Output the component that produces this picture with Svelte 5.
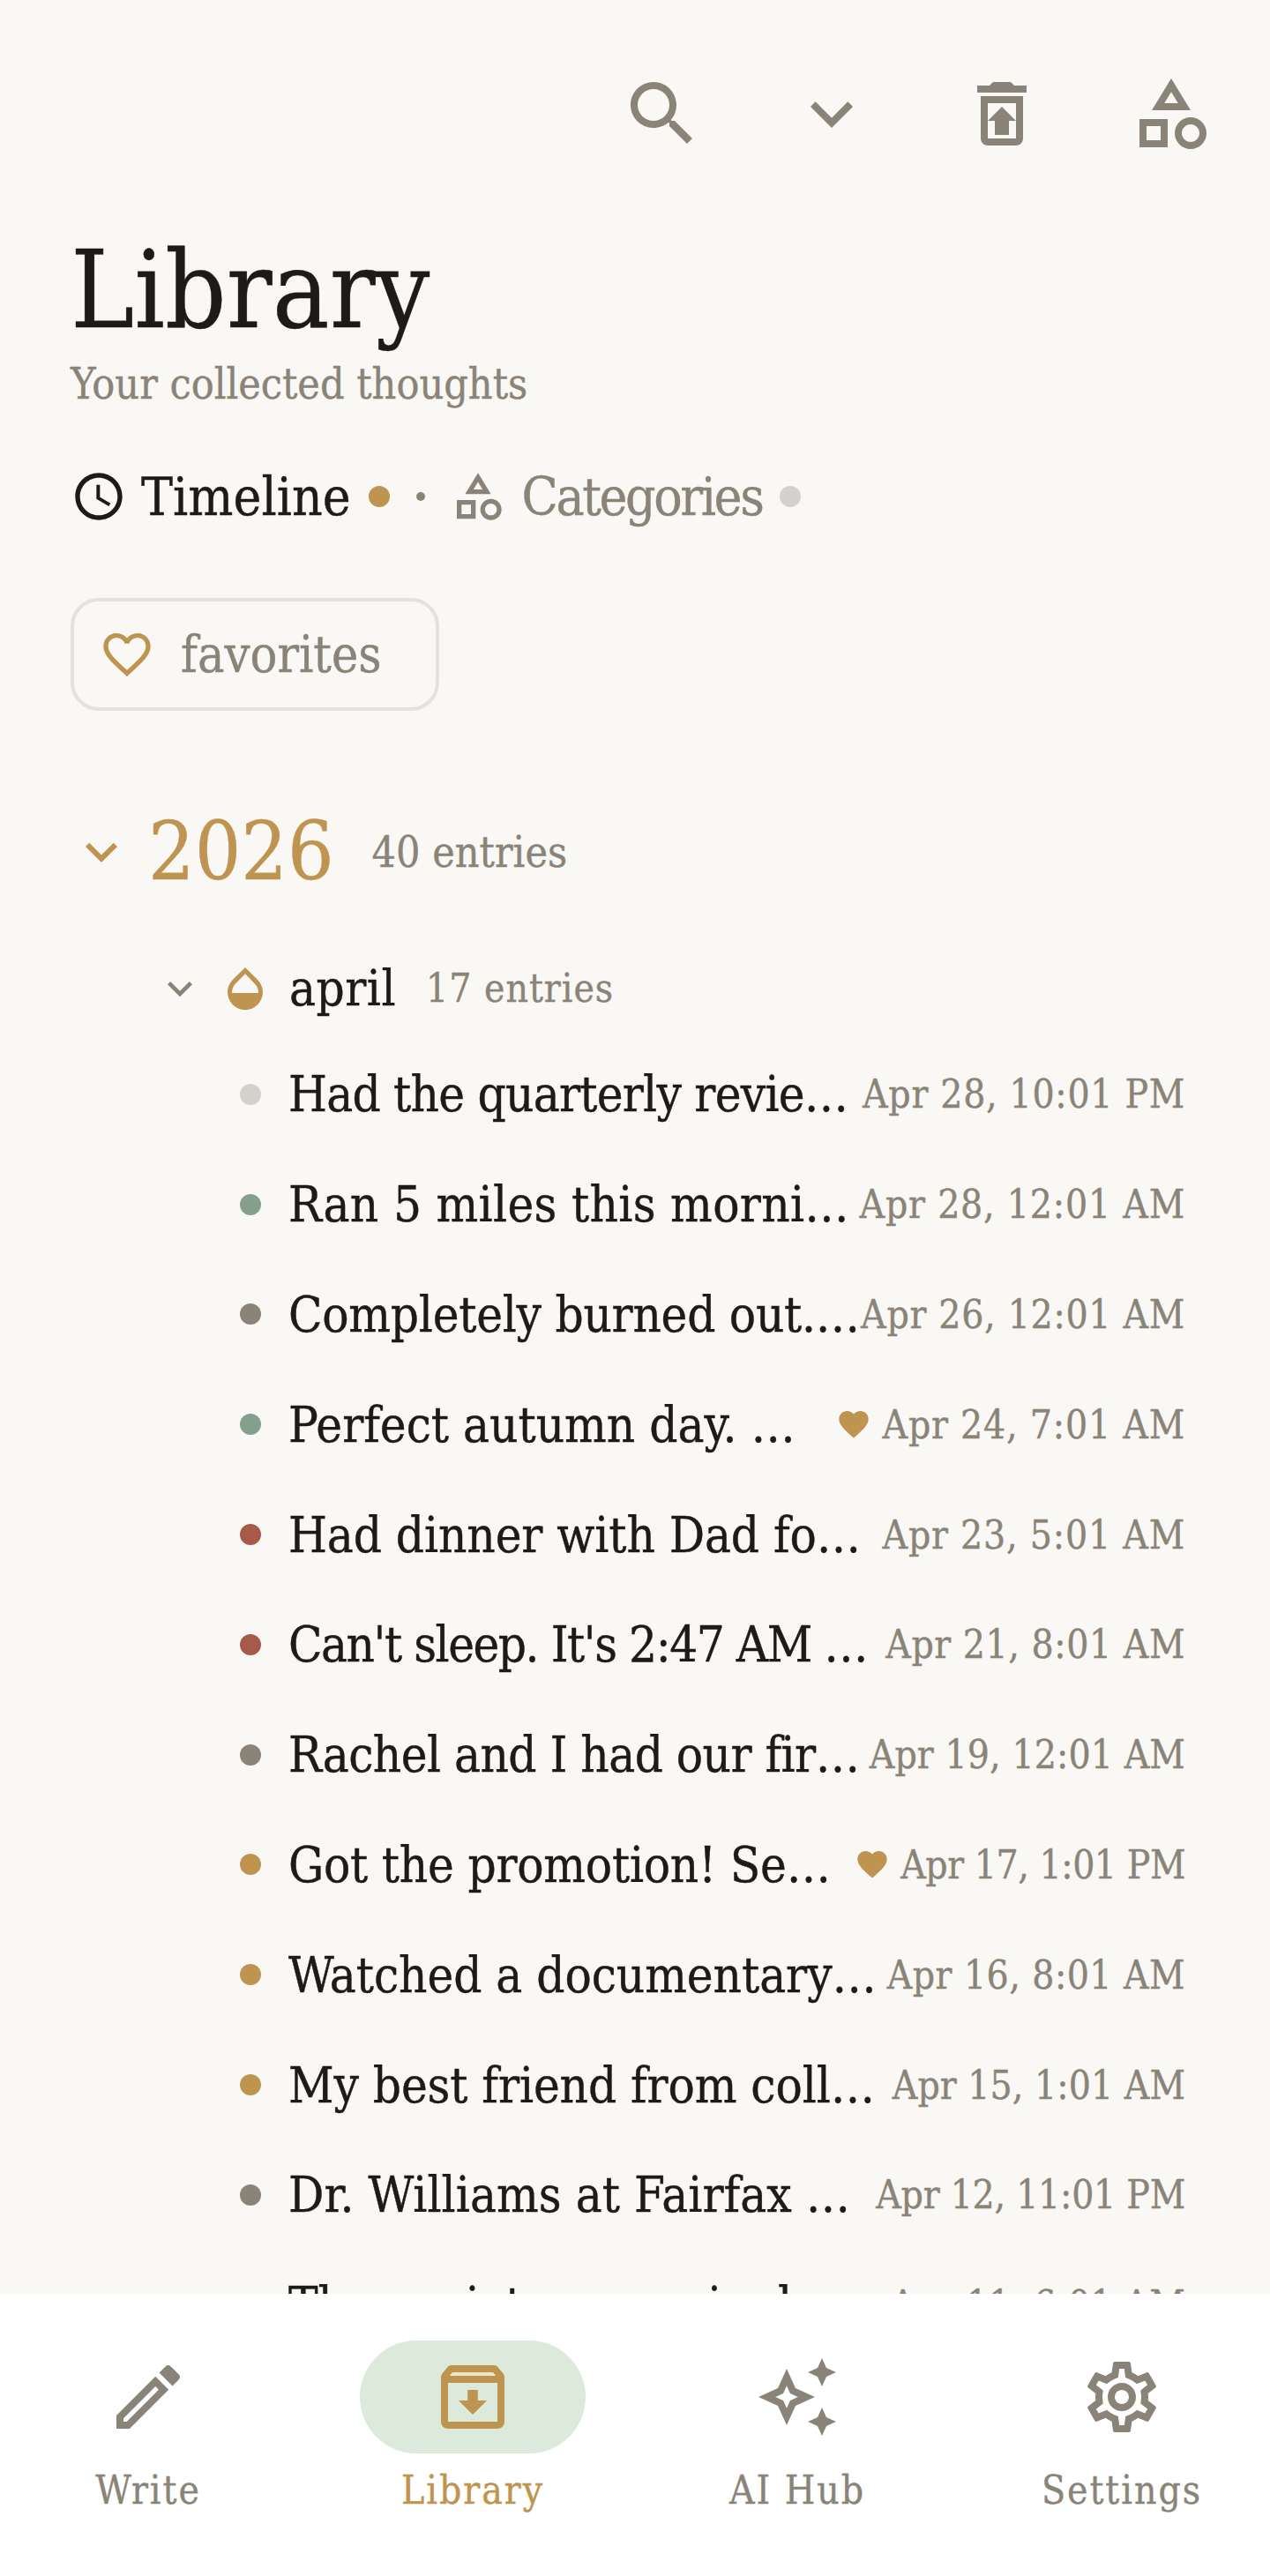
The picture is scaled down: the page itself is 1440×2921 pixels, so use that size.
<script lang="ts">
  // ls / dateLs: per-row tracking, the serif here runs wider or narrower than the original on some rows
  const rows = [
    { title: 'Had the quarterly revie…', ls: -0.77, date: 'Apr 28, 10:01 PM', dateLs: 0.7, mood: 'grey' },
    { title: 'Ran 5 miles this morni…', ls: 0.3, date: 'Apr 28, 12:01 AM', dateLs: 0.8, mood: 'green' },
    { title: 'Completely burned out.…', ls: -0.27, date: 'Apr 26, 12:01 AM', dateLs: 0.7, mood: 'taupe' },
    { title: 'Perfect autumn day. …', ls: -0.02, date: 'Apr 24, 7:01 AM', dateLs: 0.8, mood: 'green', fav: true },
    { title: 'Had dinner with Dad fo…', ls: -0.1, date: 'Apr 23, 5:01 AM', dateLs: 0.8, mood: 'red' },
    { title: "Can't sleep. It's 2:47 AM …", ls: -1.48, date: 'Apr 21, 8:01 AM', dateLs: 0.55, mood: 'red' },
    { title: 'Rachel and I had our fir…', ls: -0.55, date: 'Apr 19, 12:01 AM', dateLs: 0.1, mood: 'taupe' },
    { title: 'Got the promotion! Se…', ls: -0.24, date: 'Apr 17, 1:01 PM', dateLs: -0.45, mood: 'gold', fav: true },
    { title: 'Watched a documentary…', ls: -0.07, date: 'Apr 16, 8:01 AM', dateLs: 0.45, mood: 'gold' },
    { title: 'My best friend from coll…', ls: -0.1, date: 'Apr 15, 1:01 AM', dateLs: 0.05, mood: 'gold' },
    { title: 'Dr. Williams at Fairfax …', ls: 0.04, date: 'Apr 12, 11:01 PM', dateLs: -0.25, mood: 'taupe' },
    { title: 'The anxiety was crippl…', ls: -0.3, date: 'Apr 11, 6:01 AM', dateLs: 0.2, mood: 'taupe' },
  ];

  const tabs = [
    { label: 'Write', d: 'M14.06 9.02l.92.92L5.92 19H5v-.92l9.06-9.06M17.66 3c-.25 0-.51.1-.7.29l-1.83 1.83 3.75 3.75 1.83-1.83c.39-.39.39-1.02 0-1.41l-2.34-2.34c-.2-.2-.45-.29-.71-.29zm-3.6 3.19L3 17.25V21h3.75L17.81 9.94l-3.75-3.75z' },
    { label: 'Library', active: true, d: 'M20.54 5.23l-1.39-1.68C18.88 3.21 18.47 3 18 3H6c-.47 0-.88.21-1.16.55L3.46 5.23C3.17 5.57 3 6.02 3 6.5V19c0 1.1.9 2 2 2h14c1.1 0 2-.9 2-2V6.5c0-.48-.17-.93-.46-1.27zM6.24 5h11.52l.81.97H5.44l.8-.97zM5 19V8h14v11H5zm8.45-9h-2.9v3H8l4 4 4-4h-2.55z' },
    { label: 'AI Hub', d: 'M19 9l1.25-2.75L23 5l-2.75-1.25L19 1l-1.25 2.75L15 5l2.75 1.25L19 9zm-7.5.5L9 4 6.5 9.5 1 12l5.5 2.5L9 20l2.5-5.5L17 12l-5.5-2.5zM9.99 12.99L9 15.17l-.99-2.18L5.83 12l2.18-.99L9 8.83l.99 2.18 2.18.99-2.18.99zM19 15l-1.25 2.75L15 19l2.75 1.25L19 23l1.25-2.75L23 19l-2.75-1.25L19 15z' },
    { label: 'Settings', d: 'M19.43 12.98c.04-.32.07-.64.07-.98 0-.34-.03-.66-.07-.98l2.11-1.65c.19-.15.24-.42.12-.64l-2-3.46c-.09-.16-.26-.25-.44-.25-.06 0-.12.01-.17.03l-2.49 1c-.52-.4-1.08-.73-1.69-.98l-.38-2.65C14.46 2.18 14.25 2 14 2h-4c-.25 0-.46.18-.49.42l-.38 2.65c-.61.25-1.17.59-1.69.98l-2.49-1c-.06-.02-.12-.03-.18-.03-.17 0-.34.09-.43.25l-2 3.46c-.13.22-.07.49.12.64l2.11 1.65c-.04.32-.07.65-.07.98 0 .33.03.66.07.98l-2.11 1.65c-.19.15-.24.42-.12.64l2 3.46c.09.16.26.25.44.25.06 0 .12-.01.17-.03l2.49-1c.52.4 1.08.73 1.69.98l.38 2.65c.03.24.24.42.49.42h4c.25 0 .46-.18.49-.42l.38-2.65c.61-.25 1.17-.59 1.69-.98l2.49 1c.06.02.12.03.18.03.17 0 .34-.09.43-.25l2-3.46c.12-.22.07-.49-.12-.64l-2.11-1.65zm-1.98-1.71c.04.31.05.52.05.73 0 .21-.02.43-.05.73l-.14 1.13.89.7 1.08.84-.7 1.21-1.27-.51-1.04-.42-.9.68c-.43.32-.84.56-1.25.73l-1.06.43-.16 1.13-.2 1.35h-1.4l-.19-1.35-.16-1.13-1.06-.43c-.43-.18-.83-.41-1.23-.71l-.91-.7-1.06.43-1.27.51-.7-1.21 1.08-.84.89-.7-.14-1.13c-.03-.31-.05-.54-.05-.74s.02-.43.05-.73l.14-1.13-.89-.7-1.08-.84.7-1.21 1.27.51 1.04.42.9-.68c.43-.32.84-.56 1.25-.73l1.06-.43.16-1.13.2-1.35h1.39l.19 1.35.16 1.13 1.06.43c.43.18.83.41 1.23.71l.91.7 1.06-.43 1.27-.51.7 1.21-1.07.85-.89.7.14 1.13zM12 8c-2.21 0-4 1.79-4 4s1.79 4 4 4 4-1.79 4-4-1.79-4-4-4zm0 6c-1.1 0-2-.9-2-2s.9-2 2-2 2 .9 2 2-.9 2-2 2z' },
  ];

  const search = 'M15.5 14h-.79l-.28-.27C15.41 12.59 16 11.11 16 9.5 16 5.91 13.09 3 9.5 3S3 5.91 3 9.5 5.91 16 9.5 16c1.61 0 3.09-.59 4.23-1.57l.27.28v.79l5 4.99L20.49 19l-4.99-5zm-6 0C7.01 14 5 11.99 5 9.5S7.01 5 9.5 5 14 7.01 14 9.5 11.99 14 9.5 14z';
  const chevron = 'M16.59 8.59L12 13.17 7.41 8.59 6 10l6 6 6-6z';
  const restore = 'M14 14h2l-4-4-4 4h2v4h4v-4zM6 7v12c0 1.1.9 2 2 2h8c1.1 0 2-.9 2-2V7H6zm10 12H8V9h8v10zM15.5 4l-1-1h-5l-1 1H5v2h14V4h-3.5z';
  const category = 'M12 2l-5.5 9h11L12 2zm0 3.84L13.93 9h-3.87L12 5.84zM17.5 13c-2.49 0-4.5 2.01-4.5 4.5s2.01 4.5 4.5 4.5 4.5-2.01 4.5-4.5-2.01-4.5-4.5-4.5zm0 7c-1.38 0-2.5-1.12-2.5-2.5s1.12-2.5 2.5-2.5 2.5 1.12 2.5 2.5-1.12 2.5-2.5 2.5zM3 21.5h8v-8H3v8zm2-6h4v4H5v-4z';
  const clock = 'M11.99 2C6.47 2 2 6.48 2 12s4.47 10 9.99 10C17.52 22 22 17.52 22 12S17.52 2 11.99 2zM12 20c-4.42 0-8-3.58-8-8s3.58-8 8-8 8 3.58 8 8-3.58 8-8 8zm.5-13H11v6l5.25 3.15.75-1.23-4.5-2.67z';
  const heartOutline = 'M16.5 3c-1.74 0-3.41.81-4.5 2.09C10.91 3.81 9.24 3 7.5 3 4.42 3 2 5.42 2 8.5c0 3.78 3.4 6.86 8.55 11.54L12 21.35l1.45-1.32C18.6 15.36 22 12.28 22 8.5 22 5.42 19.58 3 16.5 3zm-4.4 15.55l-.1.1-.1-.1C7.14 14.24 4 11.39 4 8.5 4 6.5 5.5 5 7.5 5c1.54 0 3.04.99 3.57 2.36h1.87C13.46 5.99 14.96 5 16.5 5c2 0 3.5 1.5 3.5 3.5 0 2.89-3.14 5.74-7.9 10.05z';
  const heart = 'M12 21.35l-1.45-1.32C5.4 15.36 2 12.28 2 8.5 2 5.42 4.42 3 7.5 3c1.74 0 3.41.81 4.5 2.09C13.09 3.81 14.76 3 16.5 3 19.58 3 22 5.42 22 8.5c0 3.78-3.4 6.86-8.55 11.54L12 21.35z';
  const drop = 'M17.66 8L12 2.35 6.34 8C4.78 9.56 4 11.64 4 13.64s.78 4.11 2.34 5.67 3.61 2.35 5.66 2.35 4.1-.79 5.66-2.35S20 15.64 20 13.64 19.22 9.56 17.66 8zM6 14c.01-2 .62-3.27 1.76-4.4L12 5.27l4.24 4.38C17.38 10.77 17.99 12 18 14H6z';
</script>

<div class="app">
  <main class="content">
    <div class="toolbar">
      {#each [search, chevron, restore, category] as d}
        <svg class="icon96" viewBox="0 0 24 24"><path {d} /></svg>
      {/each}
    </div>

    <h1>Library</h1>
    <p class="subtitle">Your collected thoughts</p>

    <div class="view-switch">
      <svg class="icon64 ink" viewBox="0 0 24 24"><path d={clock} /></svg>
      <span class="view on">Timeline</span>
      <span class="dot gold"></span>
      <span class="sep"></span>
      <svg class="icon64" viewBox="0 0 24 24"><path d={category} /></svg>
      <span class="view">Categories</span>
      <span class="dot grey"></span>
    </div>

    <div class="chip">
      <svg class="icon64 goldfill" viewBox="0 0 24 24"><path d={heartOutline} /></svg>
      <span>favorites</span>
    </div>

    <div class="year">
      <svg class="icon72 goldfill" viewBox="0 0 24 24"><path d={chevron} /></svg>
      <span class="year-num">2026</span>
      <span class="year-count">40 entries</span>
    </div>

    <div class="month">
      <svg class="icon56" viewBox="0 0 24 24"><path d={chevron} /></svg>
      <svg class="icon60 goldfill" viewBox="0 0 24 24"><path d={drop} /></svg>
      <span class="month-name">april</span>
      <span class="month-count">17 entries</span>
    </div>

    <ul class="entries">
      {#each rows as r}
        <li>
          <span class="dot {r.mood}"></span>
          <span class="title" style="letter-spacing: {r.ls}px">{r.title}</span>
          {#if r.fav}
            <svg class="icon40 goldfill" viewBox="0 0 24 24"><path d={heart} /></svg>
          {/if}
          <span class="date" style="letter-spacing: {r.dateLs}px">{r.date}</span>
        </li>
      {/each}
    </ul>
  </main>

  <nav>
    {#each tabs as t}
      <div class="tab" class:active={t.active}>
        <div class="pill">
          <svg class="icon96" viewBox="0 0 24 24">
            {#if t.active}<rect x="5" y="5" width="14" height="1.6" fill="#e8e6c8" />{/if}
            <path d={t.d} />
          </svg>
        </div>
        <span>{t.label}</span>
      </div>
    {/each}
  </nav>
</div>

<style>
  :global(body) {
    margin: 0;
    background: #faf8f5;
  }
  .app {
    width: 1440px;
    height: 2921px;
    display: flex;
    flex-direction: column;
    font-family: 'DejaVu Serif', 'Liberation Serif', serif;
    font-stretch: condensed;
    -webkit-text-stroke: 0.4px currentColor;
    color: #1c1b17;
    background: #faf8f5;
  }
  .content {
    flex: 1;
    min-height: 0;
    overflow: hidden;
    padding: 81px 96px 0 80px;
  }
  svg {
    display: block;
    flex: none;
    fill: #8a8478;
  }
  .icon96 { width: 96px; height: 96px; }
  .icon72 { width: 72px; height: 72px; }
  .icon64 { width: 64px; height: 64px; }
  .icon60 { width: 60px; height: 60px; }
  .icon56 { width: 56px; height: 56px; }
  .icon40 { width: 40px; height: 40px; }
  .ink { fill: #1c1b17; }
  .goldfill { fill: #be9450; }

  .toolbar {
    display: flex;
    justify-content: flex-end;
    gap: 96.5px;
    margin-right: -32px;
  }
  h1 {
    margin: 83.5px 0 0;
    font-size: 121px;
    font-weight: 400;
    line-height: 138px;
  }
  .subtitle {
    margin: 0;
    font-size: 48px;
    line-height: 72px;
    color: #8a8478;
  }
  .view-switch {
    display: flex;
    align-items: center;
    height: 64px;
    margin-top: 60px;
    font-size: 60px;
  }
  .view { color: #8a8478; margin-left: 18px; letter-spacing: -2.4px; }
  .view.on { color: #1c1b17; margin-left: 16px; letter-spacing: 0; }
  .view-switch .dot { margin-left: 20px; }
  .sep {
    width: 10px;
    height: 10px;
    border-radius: 50%;
    background: #8a8478;
    margin: 0 28px 0 30px;
  }
  .dot {
    width: 24px;
    height: 24px;
    border-radius: 50%;
    flex: none;
    background: #8a8478;
  }
  .dot.gold { background: #be9450; }
  .dot.grey { background: #d4d0cb; }
  .dot.green { background: #84a08c; }
  .dot.red { background: #a85a4a; }
  .dot.taupe { background: #8a8478; }

  .chip {
    display: inline-flex;
    align-items: center;
    gap: 29px;
    height: 128px;
    width: 418px;
    box-sizing: border-box;
    margin-top: 83px;
    padding: 0 28px;
    border: 4px solid #e3e2de;
    border-radius: 32px;
    font-size: 57px;
    color: #8a8478;
  }

  .year {
    display: flex;
    align-items: center;
    margin-top: 100px;
    margin-left: -1px;
    height: 120px;
  }
  .year-num {
    margin-left: 17px;
    font-size: 92px;
    color: #be9450;
  }
  .year-count {
    margin-left: 43px;
    font-size: 48px;
    color: #8a8478;
  }

  .month {
    display: flex;
    align-items: center;
    height: 80px;
    margin-top: 55px;
    padding-left: 96px;
  }
  .month .icon60 { margin-left: 16px; }
  .month-name {
    margin-left: 20px;
    font-size: 56px;
    letter-spacing: 0.5px;
  }
  .month-count {
    margin-left: 34px;
    font-size: 44px;
    letter-spacing: 1px;
    color: #8a8478;
  }

  .entries {
    list-style: none;
    margin: 18px 0 0;
    padding: 0 0 0 192px;
  }
  li {
    display: flex;
    align-items: center;
    height: 124.8px;
    font-size: 56px;
    white-space: nowrap;
  }
  .title { margin-left: 31px; }
  li .icon40 { margin-left: auto; }
  .date {
    margin-left: auto;
    flex: none;
    font-size: 44px;
    color: #8a8478;
  }
  li .icon40 + .date { margin-left: 12px; }

  nav {
    flex: none;
    height: 320px;
    box-sizing: border-box;
    padding: 53px 32px 0;
    display: flex;
    justify-content: space-between;
    background: #fff;
  }
  .tab {
    width: 272px;
    display: flex;
    flex-direction: column;
    align-items: center;
    font-size: 44px;
    letter-spacing: 2px;
    color: #8a8478;
  }
  .pill {
    width: 256px;
    height: 128px;
    border-radius: 64px;
    display: flex;
    align-items: center;
    justify-content: center;
    margin-bottom: 16px;
  }
  .tab.active { color: #be9450; }
  .tab.active .pill { background: #dbeadb; }
  .tab.active svg { fill: #be9450; }
</style>
